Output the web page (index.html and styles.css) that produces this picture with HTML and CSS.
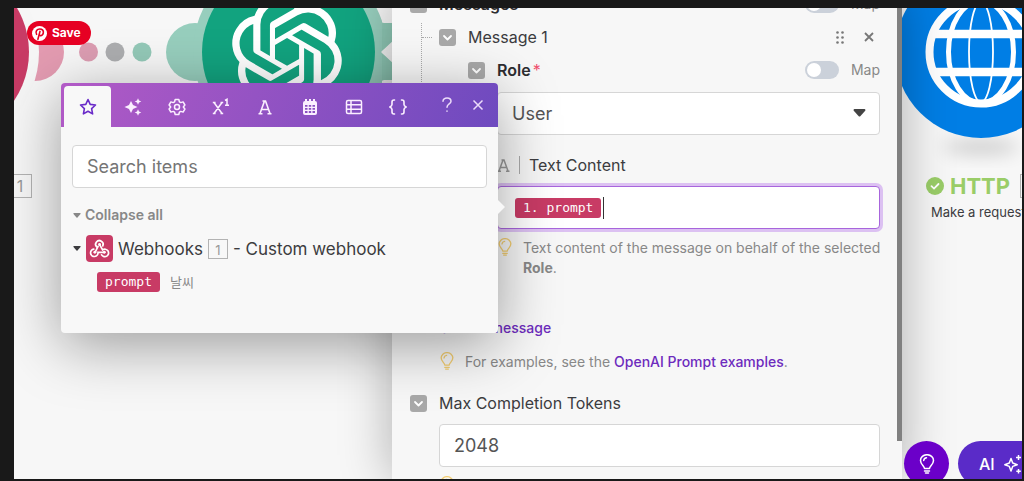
FILE: index.html
```html
<!DOCTYPE html>
<html lang="en">
<head>
<meta charset="utf-8">
<meta name="viewport" content="width=device-width, initial-scale=1">
<title>Scenario editor</title>
<link rel="stylesheet" href="styles.css">
</head>
<body>
<svg class="defs" aria-hidden="true">
  <symbol id="bulb" viewBox="0 0 16 20"><path d="M5.500 14.500c0-2.500-4-4-4-8a6.500 5.800 0 0 1 13 0c0 4-4 5.500-4 8zM5.500 17h5M6.500 19h3M4.700 6.500c.2-1.500 1.200-2.500 2.800-2.700" fill="none" stroke="currentColor" stroke-width="1.500" stroke-linecap="round" stroke-linejoin="round"/></symbol>
  <symbol id="chevron" viewBox="0 0 17 17"><path d="M5 7l3.500 3.500L12 7" fill="none" stroke="currentColor" stroke-width="1.800" stroke-linecap="round" stroke-linejoin="round"/></symbol>
  <symbol id="caret" viewBox="0 0 10 6"><path d="M1 0h8q1 .5.4 1.200L5.600 5.500q-.6.500-1.200 0L.6 1.200Q0 .5 1 0z" fill="currentColor"/></symbol>
</svg>
<main class="stage">
  <section class="canvas" aria-label="Scenario">
    <svg class="node-art links" viewBox="0 0 378 150" aria-hidden="true">
      <g transform="translate(-14 -8)">
        <circle cx="35" cy="52" r="29" fill="#e39bb1"/>
        <circle cx="-58" cy="52" r="97" fill="#f6f6f6"/>
        <circle cx="-58" cy="52" r="87" fill="#c83b65"/>
        <circle cx="88.500" cy="52" r="9.500" fill="#dc9db2"/>
        <circle cx="115" cy="52" r="9.500" fill="#adaeb0"/>
        <circle cx="142" cy="52" r="9.500" fill="#94c9b8"/>
        <circle cx="195" cy="52" r="29" fill="#97cebd"/>
        <path d="M377 20q4 3 7 3h10v18l-13 11 13 11v17h-10l-8 3z" fill="#8fc9b6"/>
        <path d="M288-45a97 97 0 0 1 94 66v62a97 97 0 1 1-94-128z" fill="#97cebd"/>
        <path d="M394 40l-13 12 13 12z" fill="#f6f6f6"/>
        <circle cx="288.500" cy="52" r="86.500" fill="#12a37f"/>
        <svg x="231.500" y="-3.500" width="111" height="111" viewBox="0 0 24 24"><path fill="#fff" d="M22.2819 9.8211a5.9847 5.9847 0 0 0-.5157-4.9108 6.0462 6.0462 0 0 0-6.5098-2.9A6.0651 6.0651 0 0 0 4.9807 4.1818a5.9847 5.9847 0 0 0-3.9977 2.9 6.0462 6.0462 0 0 0 .7427 7.0966 5.98 5.98 0 0 0 .511 4.9107 6.051 6.051 0 0 0 6.5146 2.9001A5.9847 5.9847 0 0 0 13.2599 24a6.0557 6.0557 0 0 0 5.7718-4.2058 5.9894 5.9894 0 0 0 3.9977-2.9001 6.0557 6.0557 0 0 0-.7475-7.0729zm-9.022 12.6081a4.4755 4.4755 0 0 1-2.8764-1.0408l.1419-.0804 4.7783-2.7582a.7948.7948 0 0 0 .3927-.6813v-6.7369l2.02 1.1686a.071.071 0 0 1 .038.052v5.5826a4.504 4.504 0 0 1-4.4945 4.4944zm-9.6607-4.1254a4.4708 4.4708 0 0 1-.5346-3.0137l.142.0852 4.783 2.7582a.7712.7712 0 0 0 .7806 0l5.8428-3.3685v2.3324a.0804.0804 0 0 1-.0332.0615L9.74 19.9502a4.4992 4.4992 0 0 1-6.1408-1.6464zM2.3408 7.8956a4.485 4.485 0 0 1 2.3655-1.9728V11.6a.7664.7664 0 0 0 .3879.6765l5.8144 3.3543-2.0201 1.1685a.0757.0757 0 0 1-.071 0l-4.8303-2.7865A4.504 4.504 0 0 1 2.3408 7.872zm16.5963 3.8558L13.1038 8.364 15.1192 7.2a.0757.0757 0 0 1 .071 0l4.8303 2.7913a4.4944 4.4944 0 0 1-.6765 8.1042v-5.6772a.79.79 0 0 0-.407-.667zm2.0107-3.0231l-.142-.0852-4.7735-2.7818a.7759.7759 0 0 0-.7854 0L9.409 9.2297V6.8974a.0662.0662 0 0 1 .0284-.0615l4.8303-2.7866a4.4992 4.4992 0 0 1 6.6802 4.66zM8.3065 12.863l-2.02-1.1638a.0804.0804 0 0 1-.038-.0567V6.0742a4.4992 4.4992 0 0 1 7.3757-3.4537l-.142.0805L8.704 5.459a.7948.7948 0 0 0-.3927.6813zm1.0976-2.3654l2.602-1.4998 2.6069 1.4998v2.9994l-2.5974 1.4997-2.6067-1.4997Z"/></svg>
      </g>
    </svg>
    <span class="node-count first-count">1</span>

    <div class="http-node">
      <svg class="globe" viewBox="894 8 128 160" aria-hidden="true">
        <defs><filter id="soft" x="-50%" y="-200%" width="200%" height="500%"><feGaussianBlur stdDeviation="9"/></filter></defs>
        <ellipse cx="981" cy="147" rx="38" ry="7" fill="#000" opacity=".18" filter="url(#soft)"/>
        <circle cx="981" cy="52" r="86" fill="#007ee5"/>
        <g fill="none" stroke="#fff">
          <circle cx="981" cy="52" r="51.500" stroke-width="8"/>
          <ellipse cx="981" cy="52" rx="32.500" ry="51" stroke-width="5"/>
          <ellipse cx="981" cy="52" rx="12" ry="50" stroke-width="1.800"/>
          <path d="M934 34h94M934 72h94" stroke-width="8.500"/>
        </g>
      </svg>
      <div class="http-title">
        <svg width="18" height="18" viewBox="0 0 18 18" aria-hidden="true"><circle cx="9" cy="9" r="9" fill="#9acd68"/><path d="M5.500 9.200l2.500 2.400 4.500-4.600" fill="none" stroke="#fff" stroke-width="1.800" stroke-linecap="round"/></svg>
        <strong>HTTP</strong>
        <span class="node-count"></span>
      </div>
      <p class="http-sub">Make a request</p>
    </div>
  </section>

  <form class="panel" aria-label="Module settings">
    <div class="row">
      <button type="button" class="fold" aria-label="Collapse messages"><svg><use href="#chevron"/></svg></button>
      <span class="label strong">Messages</span>
      <label class="map"><input type="checkbox" class="switch">Map</label>
    </div>
    <div class="nest tree">
      <div class="row">
        <button type="button" class="fold" aria-label="Collapse message 1"><svg><use href="#chevron"/></svg></button>
        <span class="label">Message 1</span>
        <span class="tools">
          <button type="button" class="tool" aria-label="Move"><svg width="8" height="13" viewBox="0 0 8 13"><g fill="#777"><circle cx="1.500" cy="1.500" r="1.300"/><circle cx="6.500" cy="1.500" r="1.300"/><circle cx="1.500" cy="6.500" r="1.300"/><circle cx="6.500" cy="6.500" r="1.300"/><circle cx="1.500" cy="11.500" r="1.300"/><circle cx="6.500" cy="11.500" r="1.300"/></g></svg></button>
          <button type="button" class="tool" aria-label="Remove"><svg width="10" height="10" viewBox="0 0 10 10"><path d="M1 1l8 8M9 1L1 9" stroke="#777" stroke-width="1.800"/></svg></button>
        </span>
      </div>
      <div class="nest">
        <div class="row">
          <button type="button" class="fold" aria-label="Collapse role"><svg><use href="#chevron"/></svg></button>
          <label class="label strong" for="role">Role<span class="required">*</span></label>
          <label class="map"><input type="checkbox" class="switch">Map</label>
        </div>
        <div class="nest">
          <div class="select-wrap">
            <select id="role" class="control"><option>User</option><option>System</option><option>Assistant</option></select>
            <svg class="select-caret" viewBox="0 0 10 6" aria-hidden="true"><use href="#caret"/></svg>
          </div>
          <div class="text-label">
            <svg width="13" height="13" viewBox="0 0 13 13" aria-hidden="true"><path d="M2 12L6 1h1l4 11M3.500 8.500h6M.5 12.200h3.500M9 12.200h3.500M4.500 1h2.500" fill="none" stroke="#999" stroke-width="1.500"/></svg>
            <span class="divider"></span>
            <span id="text-content" class="label">Text Content</span>
          </div>
          <div class="control focused" role="textbox" contenteditable="true" aria-labelledby="text-content"><span class="chip" contenteditable="false">1. prompt</span><span class="text-cursor"></span></div>
          <div class="help"><svg><use href="#bulb"/></svg><p>Text content of the message on behalf of the selected <b>Role</b>.</p></div>
        </div>
      </div>
    </div>
    <div class="nest">
      <a class="add" href="#add"><span>+</span>Add message</a>
      <div class="help"><svg><use href="#bulb"/></svg><p>For examples, see the <a href="#examples">OpenAI Prompt examples</a>.</p></div>
    </div>
    <div class="row tokens">
      <button type="button" class="fold" aria-label="Collapse max completion tokens"><svg><use href="#chevron"/></svg></button>
      <label class="label" for="tokens">Max Completion Tokens</label>
    </div>
    <div class="nest">
      <input id="tokens" class="control" type="text" value="2048">
      <div class="help"><svg><use href="#bulb"/></svg></div>
    </div>
    <span class="scrollbar"></span>
  </form>

  <section class="popover" aria-label="Variables">
    <header class="tabs">
      <button type="button" class="tab active" aria-label="Favourites"><svg width="18" height="18" viewBox="0 0 18 18"><path d="M9 1.500l2.200 4.900 5.300.6-3.900 3.600 1 5.300L9 13.300l-4.600 2.600 1-5.300L1.500 7l5.300-.6z" fill="none" stroke="#6a2bc9" stroke-width="1.600" stroke-linejoin="round"/></svg></button>
      <button type="button" class="tab" aria-label="AI"><svg width="18" height="18" viewBox="0 0 18 18" fill="currentColor"><path d="M7 3l2 4 4.500 2L9 11l-2 4-2-4L.5 9 5 7zM14 .2l1 2.300 2.300 1-2.300 1-1 2.300-1-2.300-2.300-1 2.300-1zM14 11.200l1 2.300 2.300 1-2.300 1-1 2.300-1-2.300-2.300-1 2.300-1z"/></svg></button>
      <button type="button" class="tab" aria-label="General"><svg width="18" height="18" viewBox="0 0 18 18" fill="none" stroke="currentColor" stroke-width="1.500" stroke-linejoin="round"><path d="M7.200 1.500h3.600l.6 2.300 1.400.8 2.300-.7 1.800 3.100L15.300 9l1.600 2-1.800 3.100-2.300-.7-1.400.8-.6 2.300H7.200l-.6-2.300-1.400-.8-2.300.7L1.100 11l1.600-2-1.600-2 1.800-3.100 2.300.7 1.400-.8z"/><circle cx="9" cy="9" r="2.500"/></svg></button>
      <button type="button" class="tab" aria-label="Math"><svg width="18" height="18" viewBox="0 0 18 18" fill="none" stroke="currentColor" stroke-width="1.500"><path d="M2 4.500l8 11M10 4.500l-8 11M.8 4.500h2.800M8.500 4.500h2.700M.8 15.500h2.800M8.500 15.500h2.700M13 2.500l2-1.200v6M13 7.200h4"/></svg></button>
      <button type="button" class="tab" aria-label="Text"><svg width="18" height="18" viewBox="0 0 18 18" fill="none" stroke="currentColor" stroke-width="1.600"><path d="M4 15.500L8.500 3h1L14 15.500M5.500 11.500h7M2.500 15.700h4M11.500 15.700h4M6.500 3H9"/></svg></button>
      <button type="button" class="tab" aria-label="Date"><svg width="18" height="18" viewBox="0 0 18 18"><path fill="currentColor" fill-rule="evenodd" d="M4 1h2v2h2V1h2v2h2V1h2v2q2 0 2 2v10q0 2-2 2H4q-2 0-2-2V5q0-2 2-2zM4 7v1.800h2.500V7zM7.800 7v1.800h2.400V7zM11.500 7v1.800H14V7zM4 10v1.800h2.500V10zM7.800 10v1.800h2.400V10zM11.500 10v1.800H14V10zM4 13v2h2.500v-2zM7.800 13v2h2.400v-2zM11.500 13v2H14v-2z"/></svg></button>
      <button type="button" class="tab" aria-label="Array"><svg width="18" height="18" viewBox="0 0 18 18" fill="none" stroke="currentColor" stroke-width="1.500"><rect x="1.500" y="2.500" width="15" height="13" rx="1.500"/><path d="M6 2.500v13M1.500 6.800h15M1.500 11.200h15"/></svg></button>
      <button type="button" class="tab" aria-label="Custom"><svg width="20" height="18" viewBox="0 0 20 18" fill="none" stroke="currentColor" stroke-width="1.600" stroke-linecap="round" stroke-linejoin="round"><path d="M6.500 2H6Q4 2 4 4v2.500Q4 8 1.800 9 4 10 4 11.500V14q0 2 2 2h.5M13.500 2h.5q2 0 2 2v2.500q0 1.500 2.200 2.500-2.200 1-2.200 2.500V14q0 2-2 2h-.5"/></svg></button>
      <button type="button" class="head-btn" aria-label="Help"><svg width="12" height="16" viewBox="0 0 12 16" fill="none" stroke="currentColor" stroke-width="1.500" stroke-linecap="round"><path d="M2 4.200C2 2.200 3.800 1 6 1s4 1.300 4 3.300C10 7 6 7 6 10.300M6 14v.3"/></svg></button>
      <button type="button" class="head-btn" aria-label="Close"><svg width="12" height="16" viewBox="0 0 12 16"><path d="M1.500 3.500l9 9M10.500 3.500l-9 9" stroke="currentColor" stroke-width="1.500"/></svg></button>
    </header>
    <div class="pop-body">
      <input class="control search" type="text" placeholder="Search items" aria-label="Search items">
      <button type="button" class="collapse"><svg class="tri" viewBox="0 0 10 6"><use href="#caret"/></svg>Collapse all</button>
      <div class="module">
        <svg class="tri" viewBox="0 0 10 6"><use href="#caret"/></svg>
        <svg class="hook" viewBox="0 0 27 27" aria-hidden="true"><rect width="27" height="27" rx="4" fill="#c83b65"/><g transform="translate(2 2) scale(.85)"><g fill="none" stroke="#fff" stroke-width="2" stroke-linecap="round"><path d="M10.200 11.700a4.400 4.400 0 1 1 7.200-1.200"/><path d="M13.700 9l3.500 6.200a4.400 4.400 0 1 1-1.200 5.800"/><path d="M11.800 10.900L8.500 17.700M19.400 18H11.800a4.400 4.400 0 1 1-5-3.800"/></g><g fill="#fff"><circle cx="13.600" cy="8.800" r="1.700"/><circle cx="8.100" cy="18" r="1.700"/><circle cx="19.200" cy="18" r="1.700"/></g></g></svg>
        <span>Webhooks</span><span class="node-count small">1</span><span>- Custom webhook</span>
      </div>
      <div class="variable"><button type="button" class="chip">prompt</button><span>날씨</span></div>
    </div>
  </section>

  <button type="button" class="save">
    <svg width="15" height="15" viewBox="0 0 15 15" aria-hidden="true"><circle cx="7.500" cy="7.500" r="7.500" fill="#fff"/><path d="M4.600 8.400C2.900 5.300 5.200 3 7.800 3c2.500 0 4 1.700 3.500 4-.4 2-1.900 3.100-3.200 2.500-.4-.2-.7-.5-.8-.9M8 5.400L5.900 13.200" fill="none" stroke="#e60023" stroke-width="1.600" stroke-linecap="round"/></svg>
    Save
  </button>

  <div class="actions">
    <button type="button" class="tips" aria-label="Tips"><svg width="16" height="20"><use href="#bulb"/></svg></button>
    <button type="button" class="ai">AI<svg width="20" height="20" viewBox="0 0 20 20" fill="none" stroke="currentColor" stroke-width="1.500" stroke-linejoin="round" aria-hidden="true"><path d="M8 4.500L9.700 9l4.500 1.700-4.500 1.700L8 17l-1.700-4.600-4.500-1.700L6.300 9zM15.500 1v5M13 3.500h5M15.500 15v4.500M13.300 17.200h4.500"/></svg></button>
  </div>
</main>
</body>
</html>
```
FILE: styles.css
```css
* { box-sizing: border-box; }

body {
  margin: 0;
  height: 100vh;
  padding: 8px 2px 2px 14px;
  background: #191919;
  color: #3c3c3f;
  font: 16px/24px Inter, "Noto Sans CJK KR", sans-serif;
}

p { margin: 0; }
button { padding: 0; border: 0; background: none; color: inherit; font: inherit; cursor: pointer; }
svg { display: block; flex: none; }
.defs { position: absolute; width: 0; height: 0; }

.stage { position: relative; height: 100%; overflow: hidden; background: #f7f7f7; }

/* Canvas */
.canvas { position: absolute; inset: 0; overflow: hidden; }
.links { position: absolute; left: 0; top: 0; width: 378px; }
.node-count {
  display: inline-grid;
  place-items: center;
  width: 24px;
  height: 24px;
  border: 1px solid #b3b3b3;
  color: #999;
  font-size: 16px;
  line-height: 20px;
}
.first-count { position: absolute; left: -6px; top: 166px; }

.http-node { position: absolute; right: 0; top: 0; width: 128px; }
.globe { width: 128px; height: 160px; }
.http-title {
  display: flex;
  align-items: center;
  gap: 6px;
  padding-left: 32px;
  margin-top: 6px;
  color: #9acd68;
  font-size: 22px;
}
.http-title .node-count { margin-left: 4px; flex: none; }
.http-sub { padding-left: 37px; margin-top: 2px; font-size: 13px; white-space: nowrap; }

/* Settings panel */
.panel {
  position: absolute;
  left: 378px;
  right: 120px;
  top: -16px;
  bottom: 0;
  padding: 0 22px 0 18px;
  background: #f7f7f7;
  box-shadow: 0 0 48px rgba(0, 0, 0, 0.3);
}
.row { display: flex; align-items: center; gap: 12px; height: 24px; margin-bottom: 9px; }
.nest { padding-left: 29px; }
.tree { position: relative; }
.tree::before {
  content: "";
  position: absolute;
  left: 11px;
  top: -2px;
  bottom: 60px;
  border-left: 1px dotted #aaa;
}
.tree::after {
  content: "";
  position: absolute;
  left: 12px;
  top: 12px;
  width: 10px;
  border-top: 1px dotted #aaa;
}
.fold { width: 17px; height: 17px; border-radius: 3px; background: #a9a9a9; color: #fff; }
.fold svg { width: 17px; height: 17px; }
.label { font-size: 16px; }
.strong { font-weight: 600; color: #2d2d30; }
.required { margin-left: 2px; color: #f0506e; font-weight: 400; }
.map { display: flex; align-items: center; gap: 12px; margin-left: auto; color: #888; font-size: 14px; }
.switch {
  appearance: none;
  position: relative;
  width: 34px;
  height: 18px;
  margin: 0;
  border-radius: 9px;
  background: #cbd1da;
}
.switch::before {
  content: "";
  position: absolute;
  left: 2px;
  top: 2px;
  width: 14px;
  height: 14px;
  border-radius: 50%;
  background: #fff;
}
.tools { display: flex; align-items: center; gap: 20px; margin-left: auto; padding-right: 6px; }

.control {
  display: block;
  width: 100%;
  height: 43px;
  padding: 0 14px;
  border: 1px solid #d6d6d6;
  border-radius: 4px;
  outline: 0;
  background: #fff;
  color: #555;
  font: 18px/24px Inter, sans-serif;
}
.select-wrap { position: relative; padding-top: 1px; }
select.control { appearance: none; }
.select-caret { position: absolute; right: 14px; top: 18px; width: 13px; height: 8px; color: #444; pointer-events: none; }
.text-label { display: flex; align-items: center; gap: 9px; height: 24px; margin: 18px 0 9px; }
.divider { width: 1px; height: 18px; background: #aaa; }
.focused {
  display: flex;
  align-items: center;
  gap: 2px;
  padding: 0 17px;
  border-color: #a865dc;
  box-shadow: 0 0 0 3px #dcc1f2;
}
.chip {
  padding: 0 8px;
  border-radius: 3px;
  background: #c83b65;
  color: #fff;
  font: 13px/20px "DejaVu Sans Mono", monospace;
}
.text-cursor { width: 1px; height: 22px; background: #333; }

.help { display: flex; gap: 10px; margin: 9px -8px 0 0; color: #888; font-size: 14px; line-height: 20px; }
.help svg { width: 16px; height: 18px; color: #f3ce72; }
.help a, .add { color: #6d2bbd; font-weight: 500; text-decoration: none; }
.add { display: flex; gap: 10px; margin-top: 38px; font-size: 14px; }
.add span { font-size: 16px; }
.add + .help { margin-top: 12px; }
.tokens { margin-top: 19px; }
.scrollbar { position: absolute; right: 0; top: 0; bottom: 38px; width: 5px; background: #808080; }

/* Variable picker */
.popover {
  position: absolute;
  left: 47px;
  top: 75px;
  width: 437px;
  border-radius: 4px;
  background: #f8f8f8;
  box-shadow: 0 12px 60px rgba(0, 0, 0, 0.38);
}
.popover::after {
  content: "";
  position: absolute;
  left: 100%;
  top: 117px;
  border: 7px solid transparent;
  border-left-color: #f8f8f8;
  border-right-width: 0;
}
.tabs {
  display: flex;
  height: 44px;
  padding: 3px 4px 0 3px;
  border-radius: 4px 4px 0 0;
  background: linear-gradient(115deg, #b25ac6, #6e4abf);
  color: #fbefff;
}
.tab { display: grid; flex: 1; place-items: center; }
.tab.active { flex: 0 0 47px; border-radius: 4px 4px 0 0; background: #f8f8f8; }
.head-btn { display: grid; flex: 0 0 31px; place-items: center; height: 38px; color: #ecdcfa; }
.tab + .head-btn { margin-left: 12px; }

.pop-body { padding: 18px 11px 41px; }
.search::placeholder { color: #757575; opacity: 1; }
.tri { width: 8px; height: 5px; }
.collapse {
  display: flex;
  align-items: center;
  gap: 4px;
  height: 20px;
  padding-left: 1px;
  margin-top: 17px;
  color: #888;
  font-size: 14px;
  font-weight: 600;
}
.module { display: flex; align-items: center; gap: 5px; padding-left: 1px; margin-top: 10px; font-size: 17px; white-space: nowrap; }
.hook { width: 27px; height: 27px; }
.small { width: 20px; height: 20px; font-size: 13px; }
.variable { display: flex; align-items: center; gap: 10px; padding-left: 25px; margin-top: 10px; color: #888; font-size: 13px; line-height: 20px; }

/* Floating buttons */
.save {
  position: absolute;
  left: 13px;
  top: 13px;
  display: flex;
  align-items: center;
  gap: 5px;
  height: 24px;
  padding: 0 10px 0 5px;
  border-radius: 12px;
  background: #e60023;
  color: #fff;
  font-size: 12px;
  font-weight: 700;
}
.actions { position: absolute; right: 0; bottom: -7px; display: flex; gap: 9px; width: 118px; color: #fff; }
.tips { display: grid; flex: none; place-items: center; width: 45px; height: 45px; border-radius: 50%; background: #6b00c9; }
.ai {
  display: flex;
  flex: none;
  align-items: center;
  gap: 8px;
  height: 45px;
  padding: 0 21px;
  border-radius: 23px;
  background: #5a2bc8;
  font-weight: 500;
}
```
